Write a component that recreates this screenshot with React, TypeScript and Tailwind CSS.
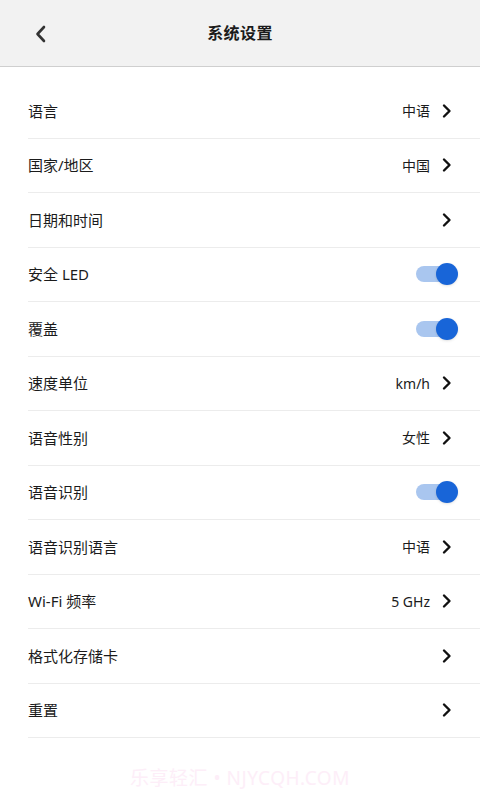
import React, { useState } from 'react';

type Row =
  | { id: string; label: string; kind: 'link'; value?: string }
  | { id: string; label: string; kind: 'toggle'; on: boolean };

const ROWS: Row[] = [
  { id: 'lang', label: '语言', kind: 'link', value: '中语' },
  { id: 'region', label: '国家/地区', kind: 'link', value: '中国' },
  { id: 'datetime', label: '日期和时间', kind: 'link' },
  { id: 'led', label: '安全 LED', kind: 'toggle', on: true },
  { id: 'overlay', label: '覆盖', kind: 'toggle', on: true },
  { id: 'speed', label: '速度单位', kind: 'link', value: 'km/h' },
  { id: 'voice', label: '语音性别', kind: 'link', value: '女性' },
  { id: 'asr', label: '语音识别', kind: 'toggle', on: true },
  { id: 'asrlang', label: '语音识别语言', kind: 'link', value: '中语' },
  { id: 'wifi', label: 'Wi-Fi 频率', kind: 'link', value: '5 GHz' },
  { id: 'format', label: '格式化存储卡', kind: 'link' },
  { id: 'reset', label: '重置', kind: 'link' },
];

const Chevron: React.FC<{ className?: string }> = ({ className }) => (
  <svg viewBox="0 0 12 16" className={className} fill="none">
    <path d="M3 2.5 L8.5 8 L3 13.5" stroke="currentColor" strokeWidth="2.4" strokeLinecap="round" strokeLinejoin="round" />
  </svg>
);

const Toggle: React.FC<{ on: boolean; onChange: () => void }> = ({ on, onChange }) => (
  <button onClick={onChange} className="relative w-[42px] h-[24px] flex items-center mr-[22px]">
    <span className={`absolute left-0 right-[6px] h-[16px] rounded-full ${on ? 'bg-[#a9c6ef]' : 'bg-[#d5d5d5]'}`} />
    <span
      className={`absolute w-[22px] h-[22px] rounded-full shadow-sm ${on ? 'right-0 bg-[#1865d8]' : 'left-0 bg-[#fafafa]'}`}
    />
  </button>
);

export default function App() {
  const [toggles, setToggles] = useState<Record<string, boolean>>({ led: true, overlay: true, asr: true });

  return (
    <div
      className="w-[480px] h-[800px] bg-white flex flex-col text-[#1b1b1b]"
      style={{ fontFamily: '"Noto Sans", "Noto Sans CJK SC", sans-serif' }}
    >
      <header className="h-[67px] shrink-0 bg-[#f2f2f2] border-b border-[#cfcfcf] flex items-center relative">
        <button className="absolute left-[33px] top-[24px] text-[#333]">
          <svg viewBox="0 0 16 20" className="w-[16px] h-[20px]" fill="none">
            <path d="M11 3 L4.5 10 L11 17" stroke="currentColor" strokeWidth="2.6" strokeLinecap="round" strokeLinejoin="round" />
          </svg>
        </button>
        <h1 className="w-full text-center text-[16px] font-bold tracking-wide">系统设置</h1>
      </header>

      <ul className="pt-[17px] pl-[28px]">
        {ROWS.map((row) => (
          <li
            key={row.id}
            className="h-[54.5px] border-b border-[#ececec] flex items-center justify-between text-[15px]"
          >
            <span>{row.label}</span>
            {row.kind === 'toggle' ? (
              <Toggle
                on={toggles[row.id]}
                onChange={() => setToggles((t) => ({ ...t, [row.id]: !t[row.id] }))}
              />
            ) : (
              <span className="flex items-center pr-[27px]">
                {row.value && <span className="text-[14px] mr-[11px]">{row.value}</span>}
                <Chevron className="w-[12px] h-[16px] text-[#111]" />
              </span>
            )}
          </li>
        ))}
      </ul>

      <div className="mt-auto pb-[8px] text-center text-[19px] tracking-[0.5px] text-[#fdeef8]">乐享轻汇 • NJYCQH.COM</div>
    </div>
  );
}
